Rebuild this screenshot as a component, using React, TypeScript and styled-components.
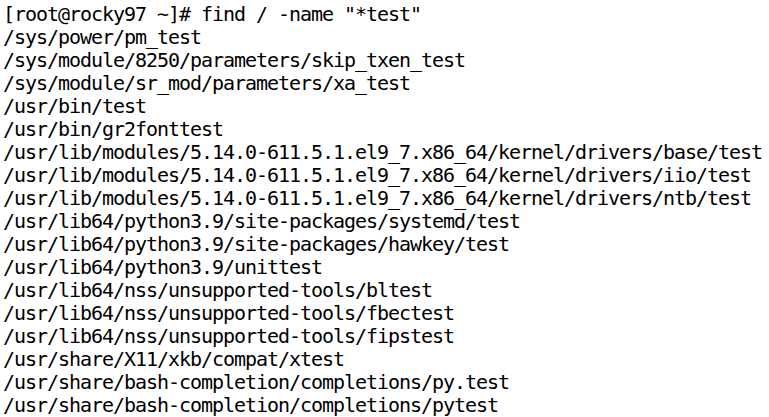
import React from "react";
import styled, { createGlobalStyle } from "styled-components";

const Global = createGlobalStyle`
  html, body { margin: 0; padding: 0; background: #ffffff; }
`;

const Terminal = styled.pre`
  margin: 0;
  padding: 3px 0 0 3px;
  font-family: "DejaVu Sans Mono", "Liberation Mono", monospace;
  font-size: 20px;
  letter-spacing: -1.04px;
  line-height: 23px;
  color: #000000;
  background: #ffffff;
  white-space: pre;
`;

const Line = styled.div`
  height: 23px;
`;

const lines = [
  '[root@rocky97 ~]# find / -name "*test"',
  "/sys/power/pm_test",
  "/sys/module/8250/parameters/skip_txen_test",
  "/sys/module/sr_mod/parameters/xa_test",
  "/usr/bin/test",
  "/usr/bin/gr2fonttest",
  "/usr/lib/modules/5.14.0-611.5.1.el9_7.x86_64/kernel/drivers/base/test",
  "/usr/lib/modules/5.14.0-611.5.1.el9_7.x86_64/kernel/drivers/iio/test",
  "/usr/lib/modules/5.14.0-611.5.1.el9_7.x86_64/kernel/drivers/ntb/test",
  "/usr/lib64/python3.9/site-packages/systemd/test",
  "/usr/lib64/python3.9/site-packages/hawkey/test",
  "/usr/lib64/python3.9/unittest",
  "/usr/lib64/nss/unsupported-tools/bltest",
  "/usr/lib64/nss/unsupported-tools/fbectest",
  "/usr/lib64/nss/unsupported-tools/fipstest",
  "/usr/share/X11/xkb/compat/xtest",
  "/usr/share/bash-completion/completions/py.test",
  "/usr/share/bash-completion/completions/pytest",
];

export default function App() {
  return (
    <>
      <Global />
      <Terminal>
        {lines.map((l, i) => (
          <Line key={i}>{l}</Line>
        ))}
      </Terminal>
    </>
  );
}
